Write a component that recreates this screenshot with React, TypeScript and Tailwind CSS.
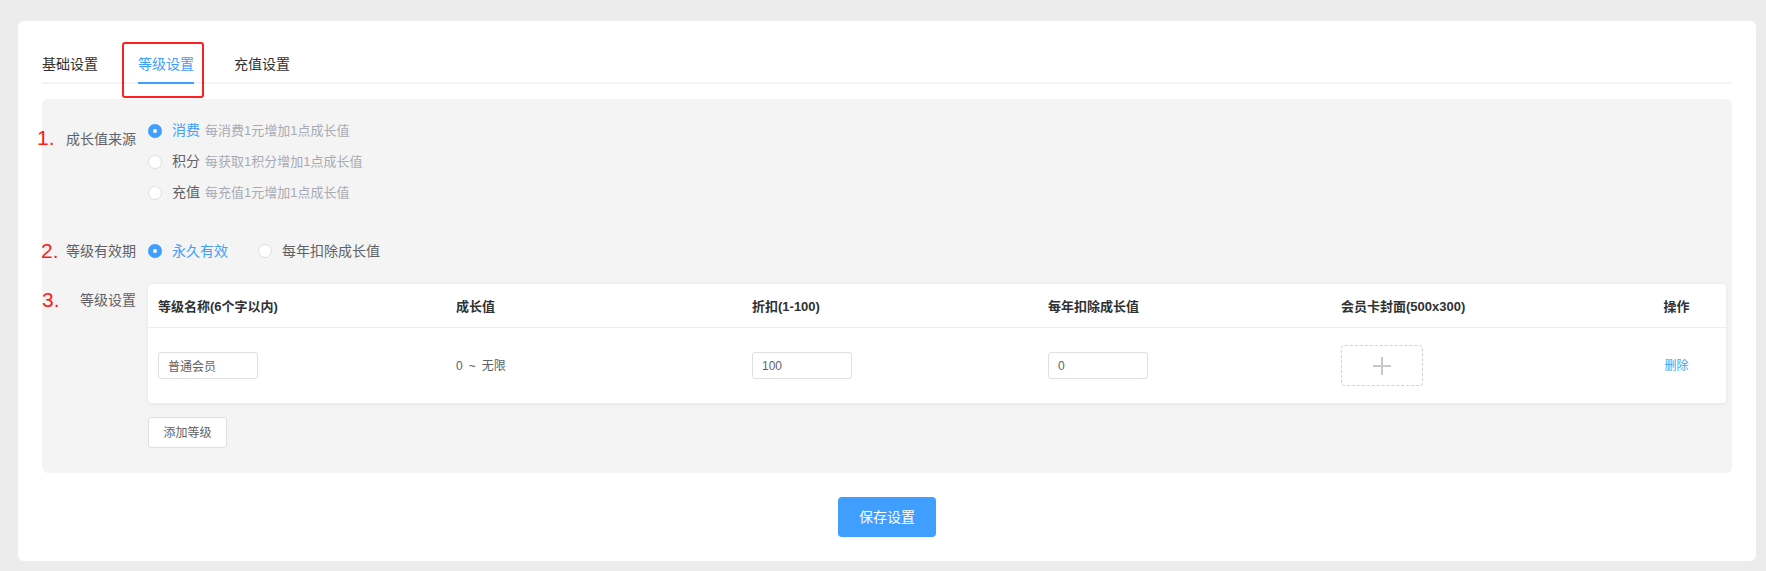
import React from 'react';

const FONT = { fontFamily: '"Liberation Sans", "Noto Sans CJK SC", sans-serif' };

const Radio: React.FC<{ checked?: boolean; className?: string }> = ({ checked, className = '' }) =>
  checked ? (
    <span className={`w-[14px] h-[14px] rounded-full bg-[#409eff] flex items-center justify-center shrink-0 ${className}`}>
      <span className="w-[4px] h-[4px] rounded-full bg-white" />
    </span>
  ) : (
    <span className={`block w-[14px] h-[14px] rounded-full border border-[#dcdfe6] bg-white shrink-0 ${className}`} />
  );

const Mark: React.FC<{ n: string; className: string }> = ({ n, className }) => (
  <span
    className={`absolute text-[21px] leading-[22px] text-[#ff1a1a] ${className}`}
    style={{ fontFamily: '"Liberation Sans", sans-serif' }}
  >
    {n}
  </span>
);

const sources = [
  { name: '消费', desc: '每消费1元增加1点成长值', checked: true },
  { name: '积分', desc: '每获取1积分增加1点成长值', checked: false },
  { name: '充值', desc: '每充值1元增加1点成长值', checked: false },
];

const cols = 'grid grid-cols-[298px_296px_296px_293px_296px_1fr]';

const TextInput: React.FC<{ value: string }> = ({ value }) => (
  <input
    readOnly
    value={value}
    className="w-[100px] h-[27px] border border-[#dcdfe6] rounded-[3px] px-[9px] text-[12px] text-[#606266] bg-white outline-none"
  />
);

export default function App() {
  return (
    <div className="bg-[#ececec] h-[571px] pl-[18px] pr-[10px] pt-[21px]" style={FONT}>
      <div className="relative bg-white rounded-md h-[540px] px-6 pt-[23px]">
        {/* tabs */}
        <div className="flex border-b-2 border-[#f2f3f8] text-[14px]">
          <div className="h-[40px] leading-[40px] border-b-2 border-transparent -mb-[2px] pr-5 text-[#303133]">基础设置</div>
          <div className="mx-5 h-[40px] leading-[40px] border-b-2 border-[#409eff] -mb-[2px] text-[#409eff]">等级设置</div>
          <div className="h-[40px] leading-[40px] border-b-2 border-transparent -mb-[2px] px-5 text-[#303133]">充值设置</div>
        </div>
        <div className="absolute left-[104px] top-[21px] w-[82px] h-[56px] border-2 border-[#ff1f1f] rounded-[3px]" />

        {/* form panel */}
        <div className="mt-[15px] bg-[#f4f4f4] rounded-md pt-[16px] pb-[25px] pr-[6px]">
          <div className="relative flex items-start">
            <Mark n="1." className="-left-[5px] top-[12px]" />
            <div className="w-[94px] mt-[4px] leading-[40px] text-right text-[14px] text-[#606266]">成长值来源</div>
            <div className="ml-[12px] flex flex-col">
              {sources.map((s) => (
                <div key={s.name} className="h-[31px] flex items-center">
                  <Radio checked={s.checked} />
                  <span className={`ml-[10px] text-[14px] ${s.checked ? 'text-[#409eff]' : 'text-[#606266]'}`}>{s.name}</span>
                  <span className="ml-[5px] text-[13px] text-[#a8abb2]">{s.desc}</span>
                </div>
              ))}
            </div>
          </div>

          <div className="relative flex items-center h-[40px] mt-[23px]">
            <Mark n="2." className="-left-[1px] top-[9px]" />
            <div className="w-[94px] text-right text-[14px] text-[#606266]">等级有效期</div>
            <div className="ml-[12px] flex items-center text-[14px]">
              <Radio checked />
              <span className="ml-[10px] text-[#409eff]">永久有效</span>
              <Radio className="ml-[30px]" />
              <span className="ml-[10px] text-[#606266]">每年扣除成长值</span>
            </div>
          </div>

          <div className="relative flex items-start mt-[13px]">
            <Mark n="3." className="left-0 top-[5px]" />
            <div className="w-[94px] leading-[32px] text-right text-[14px] text-[#606266]">等级设置</div>
            <div className="ml-[12px] flex-1">
              <div className="bg-white rounded-[4px] shadow-[0_1px_4px_rgba(0,0,0,0.07)]">
                <div className={`${cols} h-[44px] items-center border-b border-[#ebeef5] text-[13px] font-bold text-[#303133] pt-[3px]`}>
                  <div className="px-[10px]">等级名称(6个字以内)</div>
                  <div className="px-[10px]">成长值</div>
                  <div className="px-[10px]">折扣(1-100)</div>
                  <div className="px-[10px]">每年扣除成长值</div>
                  <div className="px-[10px]">会员卡封面(500x300)</div>
                  <div className="text-center">操作</div>
                </div>
                <div className={`${cols} h-[75px] items-center text-[12px] text-[#606266]`}>
                  <div className="px-[10px]"><TextInput value="普通会员" /></div>
                  <div className="px-[10px] flex items-center">
                    <span>0</span>
                    <span className="mx-[6px]">~</span>
                    <span>无限</span>
                  </div>
                  <div className="px-[10px]"><TextInput value="100" /></div>
                  <div className="px-[10px]"><TextInput value="0" /></div>
                  <div className="px-[10px]">
                    <div className="w-[82px] h-[41px] border border-dashed border-[#d0d0d0] rounded-[4px] flex items-center justify-center">
                      <svg width="18" height="18" viewBox="0 0 18 18">
                        <path d="M9 0v18M0 9h18" stroke="#c8c8c8" strokeWidth="2" />
                      </svg>
                    </div>
                  </div>
                  <div className="text-center text-[#409eff]">删除</div>
                </div>
              </div>
              <button className="mt-[14px] w-[79px] h-[31px] border border-[#dcdfe6] bg-white rounded-[3px] text-[12px] text-[#606266]">
                添加等级
              </button>
            </div>
          </div>
        </div>

        <div className="flex justify-center mt-[24px]">
          <button className="w-[98px] h-[40px] bg-[#409eff] rounded-[4px] text-white text-[14px]">保存设置</button>
        </div>
      </div>
    </div>
  );
}
